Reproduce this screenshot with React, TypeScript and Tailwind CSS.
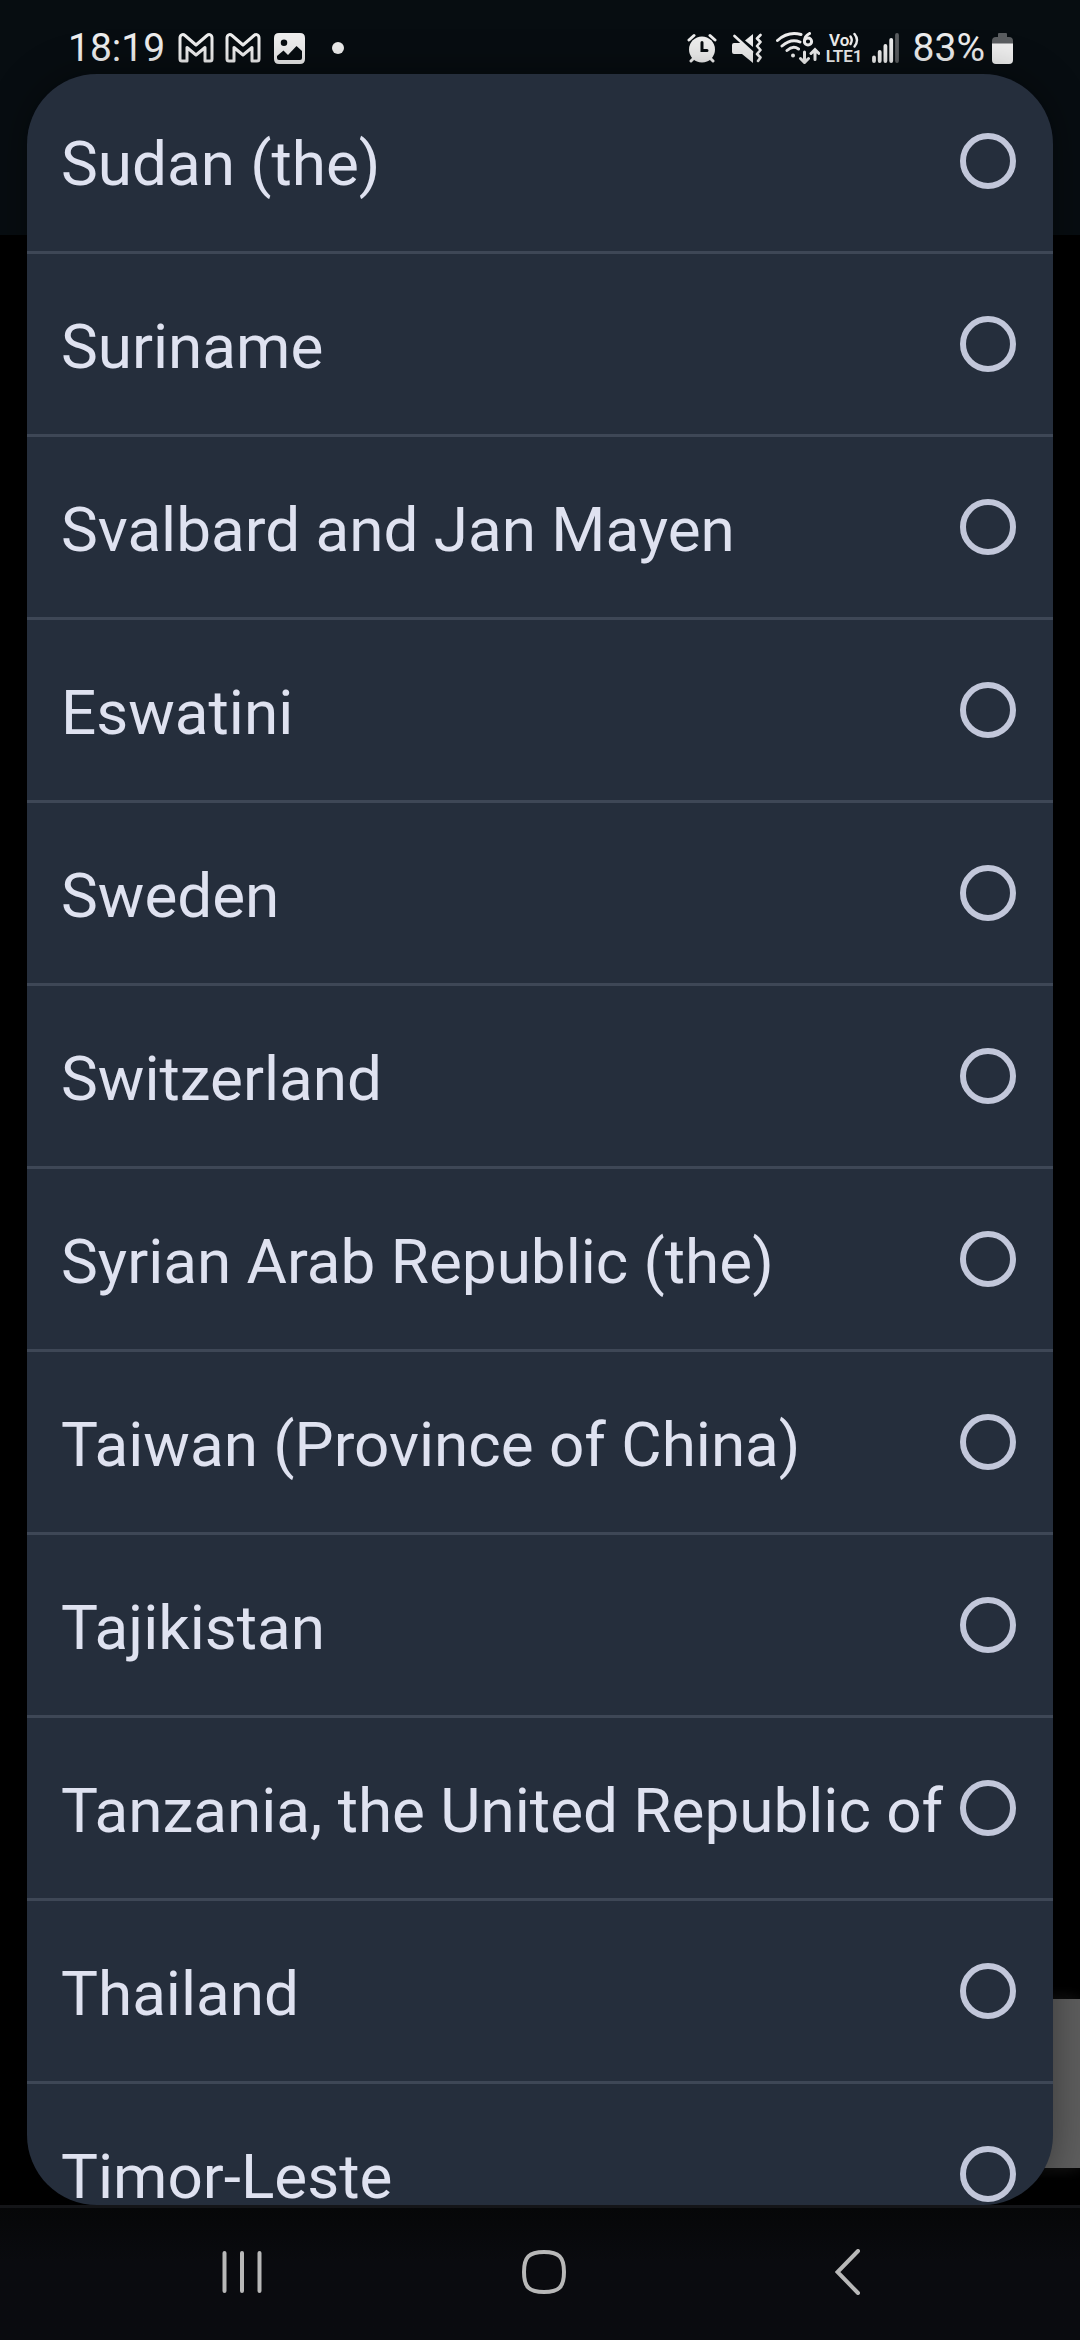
const countries = [
  'Sudan (the)',
  'Suriname',
  'Svalbard and Jan Mayen',
  'Eswatini',
  'Sweden',
  'Switzerland',
  'Syrian Arab Republic (the)',
  'Taiwan (Province of China)',
  'Tajikistan',
  'Tanzania, the United Republic of',
  'Thailand',
  'Timor-Leste',
];

function MailIcon() {
  return (
    <svg viewBox="0 0 36 30" className="h-[30px] w-9" fill="none" stroke="currentColor" strokeWidth="3" strokeLinejoin="round">
      <path d="M2 26V5C2 1.500 5 .8 7 2.500L18 12L29 2.500C31 .8 34 1.500 34 5V26Q34 28 32 28H27V14.500L18 22L9 14.500V28H4Q2 28 2 26Z" />
    </svg>
  );
}

function PictureIcon() {
  return (
    <svg viewBox="0 0 31 31" className="h-[31px] w-[31px]">
      <path
        fill="currentColor"
        fillRule="evenodd"
        d="M5 0H26Q31 0 31 5V26Q31 31 26 31H5Q0 31 0 26V5Q0 0 5 0ZM10 6.500A3.200 3.200 0 1 0 10 13A3.200 3.200 0 1 0 10 6.500ZM3 23V25Q3 27 5 27H26Q28 27 28 25V18L22.500 13L14 22L9.500 17.500Z"
      />
    </svg>
  );
}

function AlarmIcon() {
  return (
    <svg viewBox="0 0 30 30" className="h-[30px] w-[30px]" fill="none" strokeLinecap="round">
      <path d="M2 7L7 2.500M28 7L23 2.500M4 28L7 25M26 28L23 25" stroke="currentColor" strokeWidth="3" />
      <circle cx="15" cy="16.500" r="13" fill="currentColor" />
      <path d="M15 9.500V17.500H20" stroke="#070c10" strokeWidth="3" />
    </svg>
  );
}

function MuteIcon() {
  return (
    <svg viewBox="0 0 30 30" className="h-[30px] w-[30px]">
      <path d="M13 7.500L21 1V14ZM2 10H9L21 19V30L10 21H2Q0 21 0 19V12Q0 10 2 10Z" fill="currentColor" />
      <path
        d="M2.500 3L20 19M28.500 2L25 5.500L28.500 9L25 13L28.500 17L25 21L28.500 24.500L26 28"
        fill="none"
        stroke="currentColor"
        strokeWidth="2.600"
        strokeLinecap="round"
        strokeLinejoin="round"
      />
    </svg>
  );
}

function WifiIcon() {
  return (
    <svg viewBox="0 0 44 32" className="h-8 w-11" fill="none" stroke="currentColor" strokeWidth="3" strokeLinecap="round">
      <path d="M1.500 8.500Q12 -1 25 2.500M6 14Q15 6 24 10M11 18.500Q17 13 22.500 17" />
      <circle cx="17" cy="23.500" r="2" fill="currentColor" stroke="none" />
      <path d="M28.500 20V30M24.500 26.500L28.500 30.500L32.500 26.500M39 27.500V18M35 21.500L39 17.500L43 21.500" />
      <path d="M33.500 1.500Q28.500 4 28.500 9" />
      <circle cx="32" cy="9.500" r="3.600" />
    </svg>
  );
}

function VolteIcon() {
  return (
    <span className="flex flex-col items-center text-[17px] leading-4 font-semibold">
      <span className="flex h-4 items-center">
        Vo
        <svg viewBox="0 0 10 16" className="h-4 w-[10px]" fill="none" stroke="currentColor" strokeWidth="2.400" strokeLinecap="round">
          <path d="M1.500 4.500Q4 8 1.500 12M5.500 2Q10.500 8 5.500 14.500" />
        </svg>
      </span>
      <span className="h-4">LTE1</span>
    </span>
  );
}

function SignalIcon() {
  return (
    <svg viewBox="0 0 27 30" className="h-[30px] w-[27px]" fill="none" stroke="currentColor" strokeWidth="3.800" strokeLinecap="round">
      <path d="M2 24.500V28M7.700 19V28M13.400 13V28M19.200 7V28" />
      <path d="M25 2V28" stroke="#5a5d60" />
    </svg>
  );
}

function BatteryIcon() {
  return (
    <svg viewBox="0 0 21 31" className="h-[31px] w-[21px]">
      <path d="M7 0H14Q15 0 15 1V4H17Q21 4 21 8V12H0V8Q0 4 4 4H6V1Q6 0 7 0Z" fill="#5a5d60" />
      <path d="M0 10.500H21V27Q21 31 17 31H4Q0 31 0 27Z" fill="currentColor" />
    </svg>
  );
}

function StatusBar() {
  return (
    <header className="relative flex h-[74px] shrink-0 items-center justify-between pt-[22px] pr-[67px] pl-[68px] text-[39px] leading-none text-[#eeeeee]">
      <div className="flex items-center">
        <span>18:19</span>
        <span className="ml-[13px] flex items-center gap-[11px]">
          <MailIcon />
          <MailIcon />
        </span>
        <span className="ml-[13px]">
          <PictureIcon />
        </span>
        <span className="ml-[27px] size-3 rounded-full bg-current" />
      </div>
      <div className="flex items-center">
        <AlarmIcon />
        <span className="ml-[15px]">
          <MuteIcon />
        </span>
        <span className="ml-[14px]">
          <WifiIcon />
        </span>
        <span className="ml-[6px]">
          <VolteIcon />
        </span>
        <span className="ml-[9px]">
          <SignalIcon />
        </span>
        <span className="ml-[14px]">83%</span>
        <span className="ml-[7px]">
          <BatteryIcon />
        </span>
      </div>
    </header>
  );
}

function CountryRow({ name }: { name: string }) {
  return (
    <li className="border-b-3 border-[#3e4756]">
      <label className="flex h-[180px] items-center justify-between pr-[37px] pl-[34px]">
        <span className="pt-[6px] text-[62px] leading-[74px] whitespace-nowrap">{name}</span>
        <input
          type="radio"
          name="country"
          value={name}
          className="size-14 shrink-0 appearance-none rounded-full border-6 border-[#c2c7da] checked:bg-[#c2c7da]"
        />
      </label>
    </li>
  );
}

function NavigationBar() {
  return (
    <nav className="relative grid h-[135px] shrink-0 grid-cols-3 items-center border-t-3 border-[#141518] bg-linear-to-b from-[#060708] to-[#0a0b0f] to-40% px-[90px] pb-1 text-[#b8b8b8]">
      <button type="button" aria-label="Recent apps" className="flex justify-center pl-1">
        <svg viewBox="0 0 44 44" className="size-11" stroke="currentColor" strokeWidth="4" strokeLinecap="round">
          <path d="M4.500 3V41M22 3V41M39.500 3V41" />
        </svg>
      </button>
      <button type="button" aria-label="Home" className="flex justify-center pl-2">
        <svg viewBox="0 0 44 44" className="size-11" fill="none" stroke="currentColor" strokeWidth="4">
          <path d="M22 2C37 2 42 7 42 22S37 42 22 42S2 37 2 22S7 2 22 2Z" />
        </svg>
      </button>
      <button type="button" aria-label="Back" className="flex justify-center pl-4">
        <svg viewBox="0 0 26 46" className="h-[46px] w-[26px]" fill="none" stroke="currentColor" strokeWidth="4" strokeLinecap="round">
          <path d="M23 2L2.500 23L23 44" />
        </svg>
      </button>
    </nav>
  );
}

export default function App() {
  return (
    <div className="relative flex h-screen flex-col overflow-hidden bg-black font-[Roboto,sans-serif]">
      <div aria-hidden="true" className="absolute inset-0 flex flex-col">
        <div className="h-[235px] bg-[#070d11]" />
        <div className="flex flex-1 items-end justify-end pb-[172px]">
          <div className="h-[169px] w-40 bg-[#5e5e5e] shadow-[0_0_16px_#1c1c1c]" />
        </div>
      </div>
      <StatusBar />
      <main
        role="dialog"
        aria-label="Choose a country"
        className="relative mx-[27px] min-h-0 flex-1 overflow-hidden rounded-[70px] bg-[#252e3c] text-[#dfe2f0] shadow-[0_0_40px_rgba(0,0,0,0.4)]"
      >
        <ul className="-mt-[3px]">
          {countries.map((name) => (
            <CountryRow key={name} name={name} />
          ))}
        </ul>
      </main>
      <NavigationBar />
    </div>
  );
}
